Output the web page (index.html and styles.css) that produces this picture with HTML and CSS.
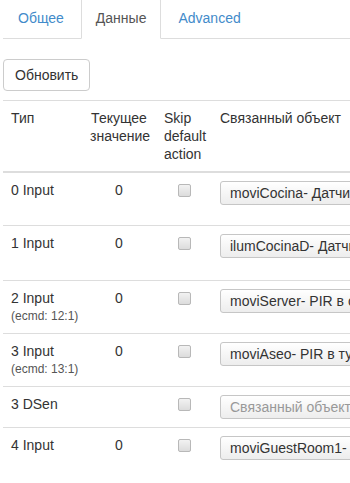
FILE: index.html
```html
<!DOCTYPE html>
<html lang="ru">
    <head>
        <meta charset="utf-8">
        <title>Данные</title>
        <link rel="stylesheet" href="styles.css">
    </head>
    <body>
        <div class="page">
            <ul class="tabs">
                <li class="tab"><a>Общее</a></li>
                <li class="tab active"><a>Данные</a></li>
                <li class="tab"><a>Advanced</a></li>
            </ul>

            <div class="toolbar">
                <button class="btn">Обновить</button>
            </div>

            <table class="ports">
                <colgroup>
                    <col class="col-type">
                    <col class="col-val">
                    <col class="col-skip">
                    <col class="col-obj">
                </colgroup>
                <thead>
                    <tr>
                        <th>Тип</th>
                        <th class="val">Текущее значение</th>
                        <th>Skip default action</th>
                        <th>Связанный объект</th>
                    </tr>
                </thead>
                <tbody>
                    <tr>
                        <td>0 Input</td>
                        <td class="val"><div class="val-box">0</div></td>
                        <td class="skip"><span class="check"></span></td>
                        <td><div class="obj">moviCocina- Датчик движения на кухне</div></td>
                    </tr>
                    <tr class="row-wide">
                        <td>1 Input</td>
                        <td class="val"><div class="val-box">0</div></td>
                        <td class="skip"><span class="check"></span></td>
                        <td><div class="obj">ilumCocinaD- Датчик освещенности</div></td>
                    </tr>
                    <tr>
                        <td>2 Input<div class="ecmd">(ecmd: 12:1)</div></td>
                        <td class="val"><div class="val-box">0</div></td>
                        <td class="skip"><span class="check"></span></td>
                        <td><div class="obj">moviServer- PIR в серверной</div></td>
                    </tr>
                    <tr>
                        <td>3 Input<div class="ecmd">(ecmd: 13:1)</div></td>
                        <td class="val"><div class="val-box">0</div></td>
                        <td class="skip"><span class="check"></span></td>
                        <td><div class="obj">moviAseo- PIR в туалете</div></td>
                    </tr>
                    <tr>
                        <td>3 DSen</td>
                        <td class="val"></td>
                        <td class="skip"><span class="check"></span></td>
                        <td><div class="obj placeholder">Связанный объект</div></td>
                    </tr>
                    <tr>
                        <td>4 Input</td>
                        <td class="val"><div class="val-box">0</div></td>
                        <td class="skip"><span class="check"></span></td>
                        <td><div class="obj">moviGuestRoom1- PIR в гостевой</div></td>
                    </tr>
                </tbody>
            </table>
        </div>
    </body>
</html>
```

FILE: styles.css
```css
:root {
    --line: #dddddd;
    --text: #333333;
    --link: #428bca;
}

html, body {
    margin: 0;
    padding: 0;
    background: #ffffff;
    overflow: hidden;
}

body {
    font-family: "Liberation Sans", Arial, sans-serif;
    font-size: 14px;
    line-height: 20px;
    color: var(--text);
}

.page {
    padding-left: 3px;
    width: 600px;
}

/** tabs */
.tabs {
    display: flex;
    list-style: none;
    margin: -3px 0 0 0;
    padding: 0;
    border-bottom: 1px solid var(--line);
}

.tab {
    margin-right: 2px;
    margin-bottom: -1px;
}

.tab a {
    display: block;
    padding: 10px 14px;
    line-height: 20px;
    color: var(--link);
    border: 1px solid transparent;
    border-radius: 4px 4px 0 0;
}

.tab.active a {
    color: #555555;
    background: #ffffff;
    border-color: var(--line);
    border-bottom-color: #ffffff;
}

/** toolbar */
.toolbar {
    padding: 20px 0 9px 0;
}

.btn {
    font: inherit;
    color: var(--text);
    background: #ffffff;
    border: 1px solid #cccccc;
    border-radius: 4px;
    padding: 5px 11px;
    line-height: 20px;
}

/** table */
.ports {
    table-layout: fixed;
    border-collapse: collapse;
    border-top: 1px solid var(--line);
    width: 560px;
}

.col-type { width: 79px; }
.col-val { width: 74px; }
.col-skip { width: 56px; }

.ports th,
.ports td {
    padding: 8px;
    line-height: 18px;
    vertical-align: top;
    text-align: left;
}

.ports th {
    font-weight: normal;
    border-bottom: 2px solid var(--line);
}

.ports td {
    border-top: 1px solid var(--line);
}

.ports .val,
.ports .skip {
    text-align: center;
}

.val-box {
    min-height: 36px;
}

.row-wide .val-box {
    min-height: 38px;
}

.ecmd {
    font-size: 12px;
    color: #555555;
    white-space: nowrap;
}

.check {
    display: inline-block;
    width: 11px;
    height: 11px;
    margin-top: 3px;
    border: 1px solid #b8b8b8;
    border-radius: 2px;
    background: linear-gradient(#f2f2f2, #dcdcdc);
}

.obj {
    width: 300px;
    height: 22px;
    line-height: 22px;
    padding: 0 9px;
    border: 1px solid #c6c6c6;
    border-radius: 3px;
    background: linear-gradient(#ffffff, #ededed);
    white-space: nowrap;
    overflow: hidden;
}

.obj.placeholder {
    color: #999999;
}
```
